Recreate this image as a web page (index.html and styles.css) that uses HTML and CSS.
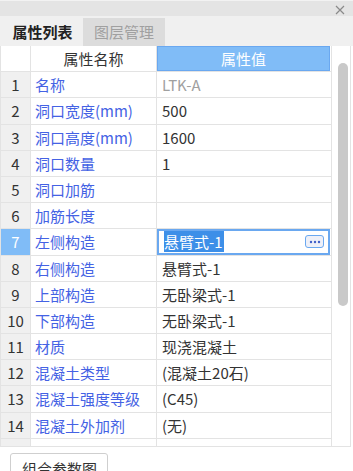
FILE: index.html
```html
<!DOCTYPE html>
<html lang="zh">
<head>
    <meta charset="UTF-8">
    <title>属性列表</title>
    <link rel="stylesheet" href="styles.css">
</head>
<body>

    <div class="titlebar">
        <svg class="close" width="10" height="10" viewBox="0 0 10 10">
            <path d="M1 1 L9 9 M9 1 L1 9" stroke="#8a8a8a" stroke-width="1.2" fill="none"/>
        </svg>
    </div>

    <div class="tabs">
        <div class="tab active">属性列表</div>
        <div class="tab">图层管理</div>
    </div>

    <div class="panel">
        <div class="grid">
            <div class="row head">
                <div class="num"></div>
                <div class="name">属性名称</div>
                <div class="val">属性值</div>
            </div>
            <div class="row"><div class="num">1</div><div class="name">名称</div><div class="val readonly">LTK-A</div></div>
            <div class="row"><div class="num">2</div><div class="name">洞口宽度(mm)</div><div class="val">500</div></div>
            <div class="row"><div class="num">3</div><div class="name">洞口高度(mm)</div><div class="val">1600</div></div>
            <div class="row"><div class="num">4</div><div class="name">洞口数量</div><div class="val">1</div></div>
            <div class="row"><div class="num">5</div><div class="name">洞口加筋</div><div class="val"></div></div>
            <div class="row"><div class="num">6</div><div class="name">加筋长度</div><div class="val"></div></div>
            <div class="row current">
                <div class="num">7</div>
                <div class="name">左侧构造</div>
                <div class="val editing">
                    <span class="selected">悬臂式-1</span>
                    <span class="more">
                        <svg width="12" height="4" viewBox="0 0 12 4">
                            <circle cx="2" cy="2" r="1.2" fill="#3f5fc8"/>
                            <circle cx="6" cy="2" r="1.2" fill="#3f5fc8"/>
                            <circle cx="10" cy="2" r="1.2" fill="#3f5fc8"/>
                        </svg>
                    </span>
                </div>
            </div>
            <div class="row"><div class="num">8</div><div class="name">右侧构造</div><div class="val">悬臂式-1</div></div>
            <div class="row"><div class="num">9</div><div class="name">上部构造</div><div class="val">无卧梁式-1</div></div>
            <div class="row"><div class="num">10</div><div class="name">下部构造</div><div class="val">无卧梁式-1</div></div>
            <div class="row"><div class="num">11</div><div class="name">材质</div><div class="val">现浇混凝土</div></div>
            <div class="row"><div class="num">12</div><div class="name">混凝土类型</div><div class="val">(混凝土20石)</div></div>
            <div class="row"><div class="num">13</div><div class="name">混凝土强度等级</div><div class="val">(C45)</div></div>
            <div class="row"><div class="num">14</div><div class="name">混凝土外加剂</div><div class="val">(无)</div></div>
            <div class="row"><div class="num"></div><div class="name"></div><div class="val"></div></div>
        </div>
        <div class="scrollbar"><div class="thumb"></div></div>
        <div class="edge"></div>
    </div>

    <div class="footer">
        <button class="btn">组合参数图</button>
    </div>

</body>
</html>
```

FILE: styles.css
```css
:root {
    --linie: #e3e3e3;
    --grau-hell: #f0f0f0;
    --blau: #80bcf7;
    --blau-rand: #6aa8f0;
    --name-blau: #4462e4;
    --text: #333333;
}

body {
    margin: 0;
    width: 353px;
    height: 471px;
    overflow: hidden;
    background-color: #ffffff;
    font-family: "Noto Sans CJK SC", "Noto Sans", sans-serif;
    font-size: 15px;
    color: var(--text);
}

.titlebar {
    height: 15px;
    border-top: 1px solid #f2f2f2;
    background-color: #e4e4e4;
    display: flex;
    justify-content: flex-end;
    align-items: center;
    padding-right: 8px;
}

.close {
    margin-top: 3px;
}

.tabs {
    height: 30px;
    background-color: var(--grau-hell);
    display: flex;
    align-items: flex-end;
    gap: 1px;
}

.tab {
    width: 82px;
    height: 28px;
    line-height: 27px;
    text-align: center;
    background-color: #dcdcdc;
    color: #a0a0a0;
}

.tab.active {
    background-color: var(--grau-hell);
    color: #222222;
    font-weight: bold;
    padding-left: 3px;
    width: 79px;
}

.panel {
    position: relative;
    height: 400px;
    width: 349px;
    border: 1px solid var(--linie);
    border-top: none;
    display: flex;
    overflow: hidden;
}

.grid {
    width: 330px;
    border-right: 1px solid var(--linie);
}

.row {
    display: grid;
    grid-template-columns: 30px 126px 173px;
    height: 26.2px;
    box-sizing: border-box;
    border-bottom: 1px solid var(--linie);
}

.row > div {
    line-height: 25px;
    white-space: nowrap;
    overflow: hidden;
}

.num {
    background-color: var(--grau-hell);
    border-right: 1px solid var(--linie);
    text-align: center;
}

.name {
    color: var(--name-blau);
    padding-left: 4px;
    border-right: 1px solid var(--linie);
}

.val {
    padding-left: 5px;
}

.val.readonly {
    color: #a0a0a0;
}

.head .num {
    background-color: #ffffff;
}

.head .name {
    color: var(--text);
    text-align: center;
    padding-left: 0;
}

.head .val {
    background-color: var(--blau);
    box-shadow: inset 0 0 0 1px var(--blau-rand);
    color: #ffffff;
    text-align: center;
    padding-left: 0;
}

.current .num {
    background-color: var(--blau);
    color: #ffffff;
}

.val.editing {
    box-shadow: inset 0 0 0 2px var(--blau-rand);
    display: flex;
    align-items: center;
    justify-content: space-between;
    padding: 0 6px 0 7px;
}

.selected {
    background-color: #3d8fe8;
    color: #ffffff;
    line-height: 21px;
    padding-right: 1px;
}

.more {
    width: 17px;
    height: 11px;
    border: 1px solid var(--blau-rand);
    border-radius: 3px;
    background-color: #eef0f8;
    display: flex;
    align-items: center;
    justify-content: center;
}

.scrollbar {
    flex: 1;
    padding: 17px 0 0 6px;
}

.thumb {
    width: 10px;
    height: 243px;
    border-radius: 5px;
    background-color: #c9c9c9;
}

.edge {
    position: absolute;
    right: -3px;
    top: -6px;
    width: 2px;
    height: 117px;
    background-color: #5a5a5a;
}

.footer {
    padding: 6px 0 0 10px;
}

.btn {
    width: 98px;
    height: 28px;
    border: 1px solid #cfcfcf;
    border-radius: 3px;
    background-color: #ffffff;
    font-family: inherit;
    font-size: 15px;
    color: var(--text);
    text-align: left;
    padding: 3px 0 0 11px;
    line-height: 20px;
    vertical-align: top;
}
```
